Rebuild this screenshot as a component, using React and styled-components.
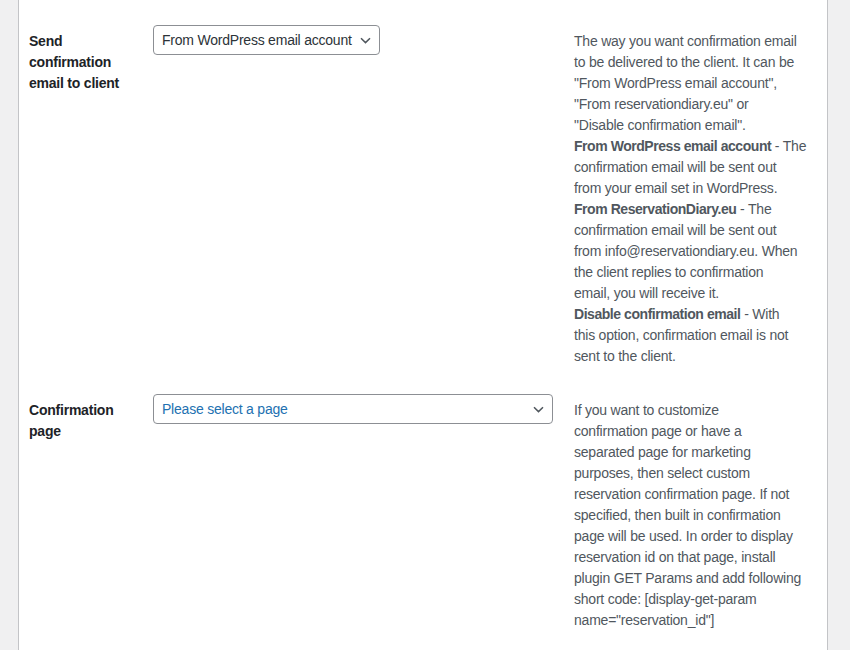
import React from "react";
import styled, { createGlobalStyle } from "styled-components";

const GlobalStyle = createGlobalStyle`
  html, body {
    margin: 0;
    padding: 0;
    background: #f0f0f1;
  }
  body {
    font-family: "Segoe UI", "Liberation Sans", Arial, sans-serif;
    font-size: 14px;
    letter-spacing: -0.22px;
    color: #3c434a;
  }
`;

const Panel = styled.div`
  width: 810px;
  min-height: 650px;
  margin-left: 18px;
  background: #fff;
  border-left: 1px solid #c3c4c7;
  border-right: 1px solid #c3c4c7;
  padding: 11px 0 0 10px;
  box-sizing: border-box;
`;

const Row = styled.div`
  display: grid;
  grid-template-columns: 124px 421px 245px;
  align-items: start;
`;

const Label = styled.div`
  padding: 20px 10px 20px 0;
  font-weight: 700;
  line-height: 21px;
  color: #1d2327;
`;

const Field = styled.div`
  padding: 14px 10px 15px 0;
`;

const SelectBox = styled.div`
  display: inline-flex;
  align-items: center;
  justify-content: space-between;
  box-sizing: border-box;
  width: ${p => (p.$wide ? "400px" : "auto")};
  height: 30px;
  padding: 0 8px 0 8px;
  border: 1px solid #8c8f94;
  border-radius: 4px;
  background: #fff;
  color: ${p => (p.$placeholder ? "#2271b1" : "#2c3338")};
  line-height: 28px;
  gap: 8px;
  cursor: pointer;
`;

const Chevron = styled.svg`
  flex: none;
  width: 11px;
  height: 7px;
`;

const Description = styled.div`
  padding: 20px 10px 13px 0;
  line-height: 21px;
  color: #50575e;
`;

const Line = styled.span`
  display: block;
  white-space: nowrap;
`;

const Strong = styled.b`
  font-weight: 700;
  letter-spacing: -0.45px;
  color: #50575e;
`;

const Select = ({ value, wide, placeholder }) => (
  <SelectBox $wide={wide} $placeholder={placeholder}>
    <span>{value}</span>
    <Chevron viewBox="0 0 11 7">
      <path d="M1 1.2 L5.5 5.6 L10 1.2" fill="none" stroke="#50575e" strokeWidth="1.5" />
    </Chevron>
  </SelectBox>
);

const deliveryLines = [
  "The way you want confirmation email",
  "to be delivered to the client. It can be",
  "\"From WordPress email account\",",
  "\"From reservationdiary.eu\" or",
  "\"Disable confirmation email\".",
  [<Strong key="b">From WordPress email account</Strong>, " - The"],
  "confirmation email will be sent out",
  "from your email set in WordPress.",
  [<Strong key="b">From ReservationDiary.eu</Strong>, " - The"],
  "confirmation email will be sent out",
  "from info@reservationdiary.eu. When",
  "the client replies to confirmation",
  "email, you will receive it.",
  [<Strong key="b">Disable confirmation email</Strong>, " - With"],
  "this option, confirmation email is not",
  "sent to the client.",
];

const pageLines = [
  "If you want to customize",
  "confirmation page or have a",
  "separated page for marketing",
  "purposes, then select custom",
  "reservation confirmation page. If not",
  "specified, then built in confirmation",
  "page will be used. In order to display",
  "reservation id on that page, install",
  "plugin GET Params and add following",
  "short code: [display-get-param",
  "name=\"reservation_id\"]",
];

export default function App() {
  return (
    <>
      <GlobalStyle />
      <Panel>
        <Row>
          <Label>Send confirmation email to client</Label>
          <Field>
            <Select value="From WordPress email account" />
          </Field>
          <Description>
            {deliveryLines.map((line, i) => (
              <Line key={i}>{line}</Line>
            ))}
          </Description>
        </Row>
        <Row>
          <Label>Confirmation page</Label>
          <Field>
            <Select value="Please select a page" wide placeholder />
          </Field>
          <Description>
            {pageLines.map((line, i) => (
              <Line key={i}>{line}</Line>
            ))}
          </Description>
        </Row>
      </Panel>
    </>
  );
}
